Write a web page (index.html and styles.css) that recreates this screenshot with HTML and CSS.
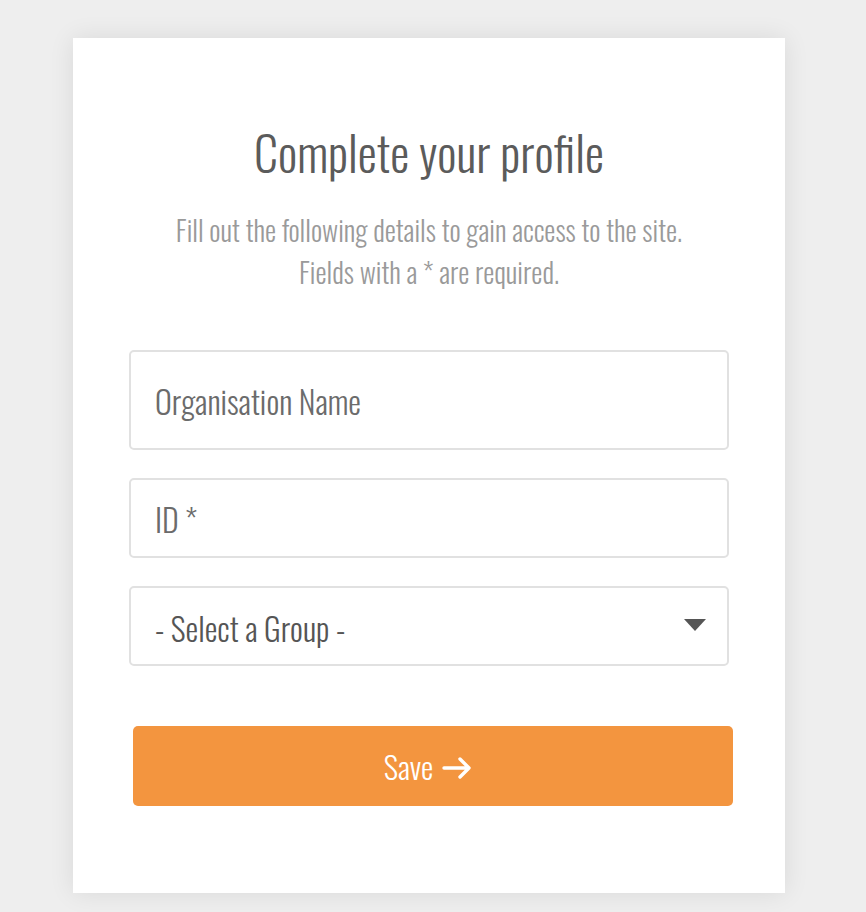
FILE: index.html
```html
<!DOCTYPE html>
<html lang="en">
<head>
<meta charset="utf-8">
<title>Complete your profile</title>
<link rel="stylesheet" href="styles.css">
</head>
<body>
<div class="card">
  <h1 class="title">Complete your profile</h1>
  <p class="subtitle">Fill out the following details to gain access to the site.<br>Fields with a * are required.</p>
  <form class="form">
    <div class="field field-tall"><span class="placeholder">Organisation Name</span></div>
    <div class="field"><span class="placeholder">ID *</span></div>
    <div class="field field-select"><span class="select-text">- Select a Group -</span><span class="caret"></span></div>
    <button type="button" class="save"><span>Save</span><svg class="arrow" width="30" height="24" viewBox="0 0 30 24"><path d="M2 12 H27 M18 3 L27 12 L18 21" fill="none" stroke="#fff" stroke-width="3.4" stroke-linecap="round" stroke-linejoin="round"/></svg></button>
  </form>
</div>
</body>
</html>
```
FILE: styles.css
```css
html, body {
  margin: 0;
  padding: 0;
}
body {
  background: #eeeeee;
  font-family: "Oswald", "Liberation Sans", sans-serif;
  font-weight: 300;
  height: 912px;
  overflow: hidden;
}
.card {
  margin: 38px 0 0 73px;
  width: 712px;
  height: 855px;
  background: #ffffff;
  box-shadow: 0 0 24px rgba(0, 0, 0, 0.09);
  box-sizing: border-box;
  padding-top: 84px;
}
.title {
  margin: 0;
  text-align: center;
  font-weight: 300;
  font-size: 48px;
  line-height: 60px;
  color: #5b5b5b;
}
.subtitle {
  margin: 27px 0 0;
  text-align: center;
  font-size: 28px;
  line-height: 42px;
  color: #9a9a9a;
}
.form {
  display: flex;
  flex-direction: column;
  margin: 57px 0 0 56px;
  width: 600px;
}
.field {
  box-sizing: border-box;
  height: 80px;
  border: 2px solid #e1e1e1;
  border-radius: 5px;
  display: flex;
  align-items: center;
  padding: 0 21px 0 24px;
  margin-bottom: 28px;
  font-size: 32px;
}
.field-tall {
  height: 100px;
}
.placeholder {
  color: #6b6b6b;
}
.field-select {
  justify-content: space-between;
  margin-bottom: 60px;
}
.select-text {
  color: #555555;
  padding-top: 3px;
}
.caret {
  width: 0;
  height: 0;
  border-left: 11px solid transparent;
  border-right: 11px solid transparent;
  border-top: 12px solid #555555;
  margin-top: -2px;
}
.save {
  margin-left: 4px;
  width: 600px;
  height: 80px;
  border: none;
  border-radius: 5px;
  background: #f3953f;
  color: #ffffff;
  font-family: inherit;
  font-weight: 350;
  font-size: 31px;
  display: flex;
  align-items: center;
  justify-content: center;
  gap: 9px;
  padding: 0;
}
.arrow {
  display: block;
  margin: 4px 10px 0 0;
}
```
